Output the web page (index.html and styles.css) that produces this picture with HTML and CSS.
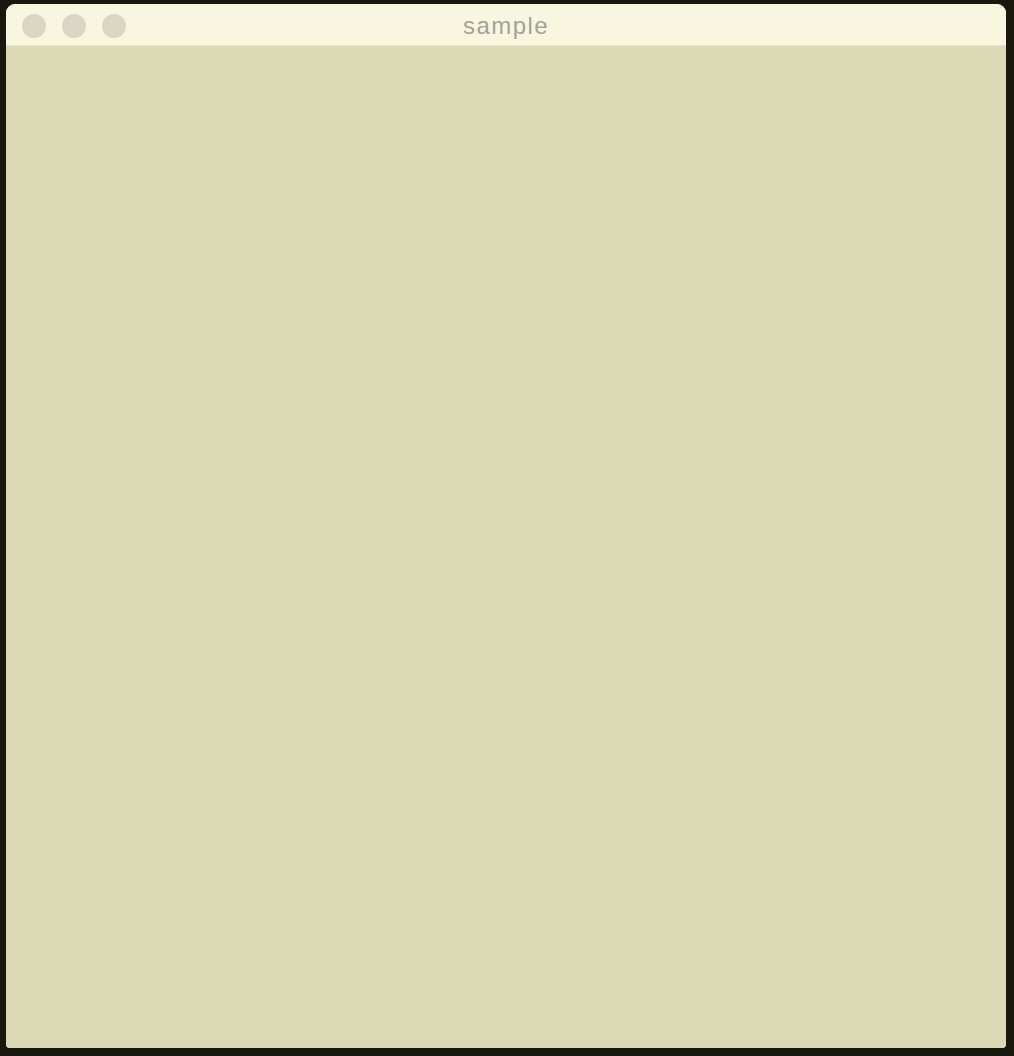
FILE: index.html
```html
<!DOCTYPE html>
<html>
<head>
<meta charset="utf-8">
<link rel="stylesheet" href="styles.css">
</head>
<body>
<div class="desk">
  <div class="window">
    <div class="titlebar">
      <div class="lights">
        <span class="light"></span>
        <span class="light"></span>
        <span class="light"></span>
      </div>
      <div class="title">sample</div>
    </div>
    <div class="content"></div>
  </div>
</div>
</body>
</html>
```
FILE: styles.css
```css
html, body {
  margin: 0;
  padding: 0;
  background: #18180f;
}
.desk {
  width: 1014px;
  height: 1056px;
  padding: 4px 8px 8px 6px;
  box-sizing: border-box;
  display: flex;
}
.window {
  flex: 1;
  display: flex;
  flex-direction: column;
  border-radius: 9px 9px 4px 4px;
  overflow: hidden;
  background: #dcd9b6;
}
.titlebar {
  height: 42px;
  flex: none;
  background: #f9f6df;
  border-bottom: 1px solid #e4e1c8;
  display: flex;
  align-items: center;
  position: relative;
  padding-top: 2px;
  box-sizing: border-box;
}
.lights {
  display: flex;
  gap: 16px;
  padding-left: 16px;
}
.light {
  width: 24px;
  height: 24px;
  border-radius: 50%;
  background: #d9d7c4;
}
.title {
  position: absolute;
  left: 0;
  right: 0;
  top: 0;
  bottom: 0;
  display: flex;
  align-items: center;
  justify-content: center;
  font-family: "Liberation Sans", Arial, sans-serif;
  font-size: 24px;
  letter-spacing: 1.4px;
  color: #a3a29a;
  padding-top: 3px;
}
.content {
  flex: 1;
  background: #dcd9b6;
}
```
